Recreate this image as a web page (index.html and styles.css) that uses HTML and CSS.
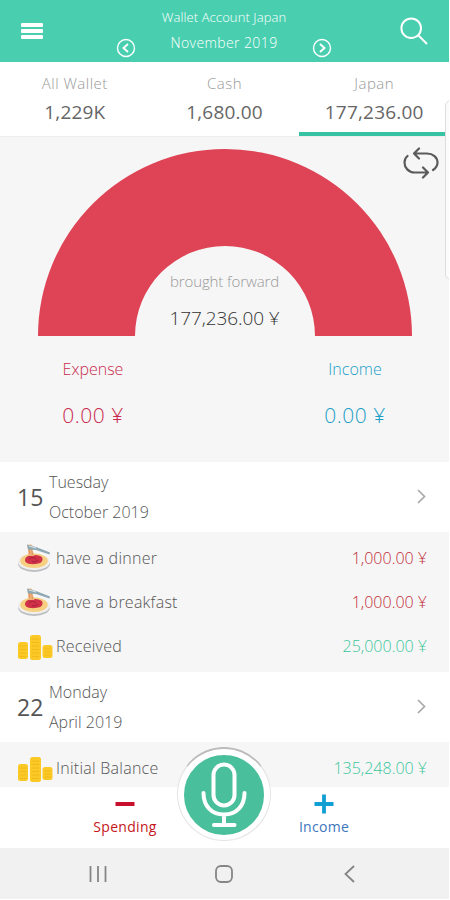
FILE: index.html
```html
<!DOCTYPE html>
<html lang="en">
<head>
    <meta charset="UTF-8">
    <meta name="viewport" content="width=device-width, initial-scale=1.0">
    <title>Wallet Account Japan</title>
    <link rel="stylesheet" href="styles.css">
</head>
<body>
    <!-- shared icons -->
    <svg class="sprite" width="0" height="0">
        <symbol id="icon-pasta" viewBox="0 0 34 30">
            <ellipse cx="17" cy="20.5" rx="16" ry="8.500" fill="#b9bcc0"/>
            <ellipse cx="17" cy="18.8" rx="16" ry="8.500" fill="#f1efec"/>
            <ellipse cx="17" cy="17.8" rx="13.8" ry="7.2" fill="#f6cf80"/>
            <path d="M8 17c0-4 5-5 9-5s9 1 8.500 4.500-3 4-7 4.500-10.500 0-10.500-4z" fill="#cf3148"/>
            <path d="M12 16c2-2 5-2 7 0M15 18.500c2 1 5 0 6-1.500" stroke="#a91f38" stroke-width="1" fill="none"/>
            <path d="M10.500 3c0-2 5-2 5 0v4l2 6h-5c-2-3-1-5-2-10z" fill="#f0b077"/>
            <path d="M12.500 4v7M14.500 6l1 6" stroke="#d98d59" stroke-width=".7"/>
            <path d="M10 1.500l9 2.500 14 5.500-.5 2L19 7l-8-.5" fill="#8fa9b4"/>
            <path d="M12 3l7 2" stroke="#dce7ea" stroke-width="1"/>
        </symbol>
        <symbol id="icon-coins" viewBox="0 0 36 26">
            <g fill="#fbc926">
                <rect x="1" y="8" width="10" height="17" rx="2.500"/>
                <rect x="13" y="1" width="11" height="25" rx="2.500"/>
                <rect x="25.500" y="11" width="10" height="13" rx="2.500"/>
            </g>
            <path d="M3 12h6M3 15.500h6M3 19h6M3 22.500h6M15 5h7M15 8.500h7M15 12h7M15 15.500h7M15 19h7M15 22.500h7M27.500 15h6M27.500 18h6M27.500 21h6" stroke="#f2b91a" stroke-width="1"/>
        </symbol>
        <symbol id="icon-chevron" viewBox="0 0 9 15">
            <path d="M1 1l6.500 6.500L1 14" fill="none" stroke="#a9a9a9" stroke-width="1.700"/>
        </symbol>
    </svg>

    <div class="app">
        <header class="header">
            <button class="menu-btn" aria-label="Menu"><i></i><i></i><i></i></button>
            <button class="month-btn" aria-label="Previous month">
                <svg width="20" height="20" viewBox="0 0 20 20"><circle cx="10" cy="10" r="8.500"/><path d="M12 6l-4.500 4 4.500 4" stroke-width="1.900"/></svg>
            </button>
            <div class="header-title">
                <h1>Wallet Account Japan</h1>
                <p>November 2019</p>
            </div>
            <button class="month-btn" aria-label="Next month">
                <svg width="20" height="20" viewBox="0 0 20 20"><circle cx="10" cy="10" r="8.500"/><path d="M8 6l4.500 4-4.500 4" stroke-width="1.900"/></svg>
            </button>
            <button class="search-btn" aria-label="Search">
                <svg width="28" height="28" viewBox="0 0 28 28"><circle cx="11.200" cy="11.200" r="9.800"/><path d="M18 18l9 9"/></svg>
            </button>
        </header>

        <nav class="wallets">
            <div class="wallet">
                <div class="wallet-name">All Wallet</div>
                <div class="wallet-value">1,229K</div>
            </div>
            <div class="wallet">
                <div class="wallet-name">Cash</div>
                <div class="wallet-value">1,680.00</div>
            </div>
            <div class="wallet active">
                <div class="wallet-name">Japan</div>
                <div class="wallet-value">177,236.00</div>
            </div>
        </nav>

        <section class="summary">
            <div class="gauge">
                <svg width="374" height="187" viewBox="0 0 374 187">
                    <path d="M0 187a187 187 0 0 1 374 0h-97a90 90 0 0 0-180 0z" fill="#de4455"/>
                </svg>
                <div class="gauge-text">
                    <div class="gauge-label">brought forward</div>
                    <div class="gauge-value">177,236.00 ¥</div>
                </div>
            </div>
            <svg class="swap-icon" width="36" height="32" viewBox="0 0 36 32">
                <path d="M16 1.500L11 6.500l5 5M11 6.500h13c6 0 10.500 4 10.500 9 0 3-1.500 5.500-4.500 7.500M4.500 9C2 11 1.500 13 1.500 15.500c0 5 4 10 10 10H25M20 20.500l5 5-5 5"/>
            </svg>
            <div class="totals">
                <div class="total expense">
                    <div class="total-label">Expense</div>
                    <div class="total-value">0.00 ¥</div>
                </div>
                <div class="total income">
                    <div class="total-label">Income</div>
                    <div class="total-value">0.00 ¥</div>
                </div>
            </div>
        </section>

        <main class="days">
            <div class="day-header">
                <div class="day-number">15</div>
                <div class="day-text">
                    <div>Tuesday</div>
                    <div class="month">October 2019</div>
                </div>
                <svg class="chevron" width="9" height="15"><use href="#icon-chevron"/></svg>
            </div>
            <ul class="entries">
                <li class="entry">
                    <svg class="entry-icon" width="34" height="30"><use href="#icon-pasta"/></svg>
                    <span class="entry-name">have a dinner</span>
                    <span class="entry-amount spent">1,000.00 ¥</span>
                </li>
                <li class="entry">
                    <svg class="entry-icon" width="34" height="30"><use href="#icon-pasta"/></svg>
                    <span class="entry-name">have a breakfast</span>
                    <span class="entry-amount spent">1,000.00 ¥</span>
                </li>
                <li class="entry">
                    <svg class="entry-icon coins" width="36" height="26"><use href="#icon-coins"/></svg>
                    <span class="entry-name">Received</span>
                    <span class="entry-amount">25,000.00 ¥</span>
                </li>
            </ul>

            <div class="day-header">
                <div class="day-number">22</div>
                <div class="day-text">
                    <div>Monday</div>
                    <div class="month">April 2019</div>
                </div>
                <svg class="chevron" width="9" height="15"><use href="#icon-chevron"/></svg>
            </div>
            <ul class="entries last">
                <li class="entry">
                    <svg class="entry-icon coins" width="36" height="26"><use href="#icon-coins"/></svg>
                    <span class="entry-name">Initial Balance</span>
                    <span class="entry-amount">135,248.00 ¥</span>
                </li>
            </ul>
        </main>

        <footer class="actions">
            <button class="action spending">
                <svg width="20" height="20" viewBox="0 0 20 20"><path d="M.5 10h19" stroke="#c8102e" stroke-width="4"/></svg>
                <span>Spending</span>
            </button>
            <button class="mic-btn" aria-label="Voice entry">
                <svg width="84" height="84" viewBox="0 0 84 84">
                    <circle cx="42" cy="42" r="42" fill="#4abf9c"/>
                    <rect x="31.500" y="11.500" width="21" height="41" rx="10.500"/>
                    <path d="M21.500 40c0 13 8 21.500 20.500 21.500S62.500 53 62.500 40M42 61.500V72M32 72h20.500"/>
                </svg>
            </button>
            <button class="action earning">
                <svg width="20" height="20" viewBox="0 0 20 20"><path d="M.5 10h19M10 .5v19" stroke="#109fd3" stroke-width="3.800"/></svg>
                <span>Income</span>
            </button>
        </footer>

        <div class="system-nav">
            <svg width="18" height="18" viewBox="0 0 18 18"><path d="M1.500 1v16M9 1v16M16.500 1v16"/></svg>
            <svg width="18" height="18" viewBox="0 0 18 18"><rect x="1" y="1" width="16" height="16" rx="5"/></svg>
            <svg width="18" height="18" viewBox="0 0 18 18"><path d="M13 1L4.500 9l8.500 8"/></svg>
        </div>

        <div class="edge-handle"></div>
    </div>
</body>
</html>
```

FILE: styles.css
```css
* {
    margin: 0;
    padding: 0;
    box-sizing: border-box;
}

body {
    font-family: 'Open Sans', 'Noto Sans', sans-serif;
    font-weight: 300;
    background: #fff;
    color: #555;
}

button {
    background: none;
    border: none;
    font: inherit;
    color: inherit;
    display: block;
}

svg {
    display: block;
}

.sprite {
    position: absolute;
}

.app {
    position: relative;
    width: 449px;
    height: 899px;
    overflow: hidden;
    white-space: nowrap;
}

/* Header */
.header {
    height: 62px;
    background: #49cfb0;
    color: #fff;
    display: flex;
    align-items: flex-start;
    padding: 0 21px;
}

.header svg {
    fill: none;
    stroke: #fff;
    stroke-width: 1.4;
}

.menu-btn {
    width: 22px;
    margin-top: 23px;
    display: flex;
    flex-direction: column;
    gap: 2px;
}

.menu-btn i {
    height: 4px;
    border-radius: 1px;
    background: #fff;
}

.month-btn {
    margin: 38px 0 0 73px;
}

.header-title {
    width: 176px;
    text-align: center;
}

.header-title + .month-btn {
    margin-left: 0;
}

.header-title h1 {
    font-size: 13px;
    font-weight: 300;
    line-height: 18px;
    letter-spacing: 0.1px;
    margin-top: 8px;
}

.header-title p {
    font-size: 14px;
    line-height: 20px;
    letter-spacing: 0.4px;
    margin-top: 7px;
}

.search-btn {
    margin: 17px 0 0 auto;
}

.header .search-btn svg {
    stroke-width: 2;
}

/* Wallet tabs */
.wallets {
    height: 75px;
    display: flex;
    border-bottom: 1px solid #eee;
}

.wallet {
    flex: 1;
    text-align: center;
    padding-top: 11px;
}

.wallet.active {
    border-bottom: 4px solid #35c3a3;
}

.wallet-name {
    font-size: 15px;
    line-height: 20px;
    letter-spacing: 0.5px;
    color: #999;
}

.wallet-value {
    font-size: 19px;
    font-weight: 400;
    line-height: 26px;
    letter-spacing: 0.2px;
    margin-top: 6px;
    color: #666;
}

/* Gauge and totals */
.summary {
    position: relative;
    height: 325px;
    background: #f6f6f6;
    padding-top: 12px;
}

.gauge {
    width: 374px;
    margin: 0 auto;
    display: grid;
}

.gauge > * {
    grid-area: 1 / 1;
}

.gauge-text {
    align-self: end;
    text-align: center;
}

.gauge-label {
    font-size: 15px;
    line-height: 20px;
    letter-spacing: -0.1px;
    color: #999;
}

.gauge-value {
    font-size: 19px;
    line-height: 26px;
    letter-spacing: -0.1px;
    margin: 14px 0 5px;
    color: #333;
}

.swap-icon {
    position: absolute;
    top: 10px;
    right: 10px;
    fill: none;
    stroke: #5b5b5b;
    stroke-width: 2.2;
    stroke-linecap: round;
    stroke-linejoin: round;
}

.totals {
    display: flex;
    justify-content: space-between;
    padding: 22px 49px 0 48px;
}

.total {
    width: 90px;
    text-align: center;
}

.total-label {
    font-size: 16px;
    line-height: 22px;
}

.total-value {
    font-size: 21px;
    line-height: 28px;
    letter-spacing: 0.5px;
    margin-top: 21px;
}

.expense {
    color: #c92b4d;
}

.income {
    color: #1c9fc6;
}

/* Days */
.day-header {
    height: 70px;
    background: #fff;
    display: flex;
    align-items: center;
    padding: 0 23px 1px 17px;
}

.day-number {
    width: 32px;
    font-size: 23px;
    font-weight: 400;
}

.day-text {
    font-size: 16px;
    line-height: 22px;
}

.day-text .month {
    margin-top: 8px;
}

.chevron {
    margin-left: auto;
}

.entries {
    list-style: none;
    background: #f6f6f6;
    padding: 4px 0;
}

.entries.last {
    padding-bottom: 0;
    height: 45px;
}

.entry {
    height: 44px;
    display: flex;
    align-items: center;
    padding: 0 22px 0 17px;
}

.entry-icon {
    margin-right: 5px;
}

.entry-icon.coins {
    margin: 2px 3px 0 0;
}

.entry-name {
    font-size: 16px;
    letter-spacing: 0.25px;
}

.entry-amount {
    margin-left: auto;
    font-size: 16px;
    color: #3cc69c;
}

.entry-amount.spent {
    color: #c22c36;
}

/* Bottom actions */
.actions {
    position: relative;
    height: 61px;
    background: #fff;
    display: flex;
    justify-content: space-between;
    padding: 0 80px;
}

.action {
    width: 90px;
    padding-top: 7px;
    font-size: 14px;
    font-weight: 400;
    line-height: 20px;
    letter-spacing: 0.3px;
    display: flex;
    flex-direction: column;
    align-items: center;
    gap: 3px;
}

.spending {
    color: #c4161c;
}

.earning {
    color: #3d75bd;
}

.mic-btn {
    position: absolute;
    left: 177px;
    top: -40px;
    width: 94px;
    height: 94px;
    display: flex;
    align-items: center;
    justify-content: center;
    border: 1px solid #e4e4e4;
    border-top: 2px solid #bbb;
    border-radius: 50%;
    background: #fff;
}

.mic-btn svg {
    flex: none;
    fill: none;
    stroke: #fff;
    stroke-width: 4;
    stroke-linecap: round;
}

.system-nav {
    height: 51px;
    background: #f1f1f1;
    display: flex;
    justify-content: space-between;
    align-items: center;
    padding: 0 90px 0 89px;
}

.system-nav svg {
    fill: none;
    stroke: #858585;
    stroke-width: 1.8;
}

.edge-handle {
    position: absolute;
    top: 100px;
    right: -8px;
    width: 12px;
    height: 180px;
    background: #fbfbfb;
    border: 1px solid #ddd;
    border-radius: 6px;
}
```
